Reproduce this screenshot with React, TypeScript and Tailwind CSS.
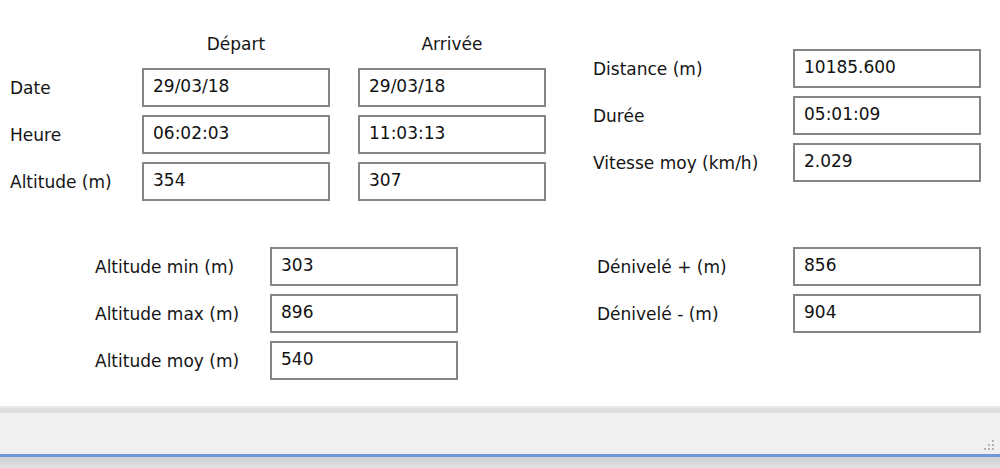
import React from 'react';

const font = { fontFamily: '"DejaVu Sans", Tahoma, sans-serif' };

function Field({ value, className = '' }: { value: string; className?: string }) {
  return (
    <div
      className={`h-[39px] w-[188px] border-2 border-[#858585] bg-white flex items-center pl-[9px] pb-[2px] text-[#111111] ${className}`}
    >
      {value}
    </div>
  );
}

function Row({ label, values, labelWidth }: { label: string; values: string[]; labelWidth: string }) {
  return (
    <div className="flex items-center">
      <div className={`${labelWidth} shrink-0 pt-[2px]`}>{label}</div>
      <div className="flex gap-[28px]">
        {values.map((v, i) => (
          <Field key={i} value={v} />
        ))}
      </div>
    </div>
  );
}

export default function App() {
  const times = [
    { label: 'Date', values: ['29/03/18', '29/03/18'] },
    { label: 'Heure', values: ['06:02:03', '11:03:13'] },
    { label: 'Altitude (m)', values: ['354', '307'] },
  ];
  const totals = [
    { label: 'Distance (m)', value: '10185.600' },
    { label: 'Durée', value: '05:01:09' },
    { label: 'Vitesse moy (km/h)', value: '2.029' },
  ];
  const altitudes = [
    { label: 'Altitude min (m)', value: '303' },
    { label: 'Altitude max (m)', value: '896' },
    { label: 'Altitude moy (m)', value: '540' },
  ];
  const denivele = [
    { label: 'Dénivelé + (m)', value: '856' },
    { label: 'Dénivelé - (m)', value: '904' },
  ];

  return (
    <div className="w-[1000px] h-[468px] flex flex-col bg-white text-[17px] text-[#141414] overflow-hidden" style={font}>
      {/* Form body */}
      <div className="flex-1">
        {/* Top section */}
        <div className="flex pt-[33px]">
          <div className="pl-[10px] w-[593px] shrink-0">
            <div className="flex gap-[28px] pl-[132px] h-[24px] items-center">
              <div className="w-[188px] text-center">Départ</div>
              <div className="w-[188px] text-center">Arrivée</div>
            </div>
            <div className="flex flex-col gap-[8px] mt-[11px]">
              {times.map((r) => (
                <Row key={r.label} label={r.label} values={r.values} labelWidth="w-[132px]" />
              ))}
            </div>
          </div>
          <div className="pt-[16px] flex flex-col gap-[8px]">
            {totals.map((r) => (
              <Row key={r.label} label={r.label} values={[r.value]} labelWidth="w-[200px]" />
            ))}
          </div>
        </div>

        {/* Bottom section */}
        <div className="flex mt-[46px]">
          <div className="pl-[95px] w-[597px] shrink-0 flex flex-col gap-[8px]">
            {altitudes.map((r) => (
              <Row key={r.label} label={r.label} values={[r.value]} labelWidth="w-[175px]" />
            ))}
          </div>
          <div className="flex flex-col gap-[8px]">
            {denivele.map((r) => (
              <Row key={r.label} label={r.label} values={[r.value]} labelWidth="w-[196px]" />
            ))}
          </div>
        </div>
      </div>

      {/* Status bar */}
      <div className="h-[62px] shrink-0 flex flex-col">
        <div className="h-[2px] bg-[#e8e8e8]" />
        <div className="h-[5px] bg-[#dedede]" />
        <div className="flex-1 bg-[#f0f0f0] relative">
          <svg className="absolute right-[4px] bottom-[2px]" width="12" height="12" viewBox="0 0 12 12">
            <rect x="8" y="0" width="2" height="2" fill="#b4b4b4" />
            <rect x="4" y="4" width="2" height="2" fill="#b4b4b4" />
            <rect x="8" y="4" width="2" height="2" fill="#b4b4b4" />
            <rect x="0" y="8" width="2" height="2" fill="#b4b4b4" />
            <rect x="4" y="8" width="2" height="2" fill="#b4b4b4" />
            <rect x="8" y="8" width="2" height="2" fill="#b4b4b4" />
          </svg>
        </div>
        <div className="h-[3px] bg-[#6f98dc]" />
        <div className="h-[11px] bg-gradient-to-b from-[#d0d0d0] to-[#e2e2e2]" />
      </div>
    </div>
  );
}
